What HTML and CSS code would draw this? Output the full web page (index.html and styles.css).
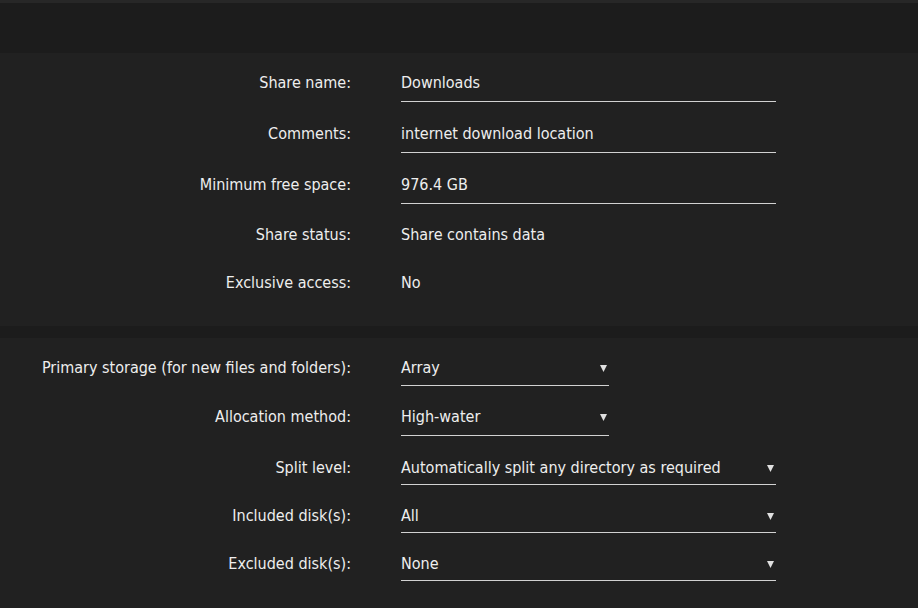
FILE: index.html
```html
<!DOCTYPE html>
<html>
<head>
<meta charset="utf-8">
<link rel="stylesheet" href="styles.css">
</head>
<body>
<div class="topbar"></div>
<section class="panel">
  <div class="row h51">
    <div class="label">Share name:</div>
    <div class="value field">Downloads</div>
  </div>
  <div class="row h51">
    <div class="label">Comments:</div>
    <div class="value field">internet download location</div>
  </div>
  <div class="row h50">
    <div class="label">Minimum free space:</div>
    <div class="value field">976.4 GB</div>
  </div>
  <div class="row h48">
    <div class="label">Share status:</div>
    <div class="value">Share contains data</div>
  </div>
  <div class="row h48">
    <div class="label">Exclusive access:</div>
    <div class="value">No</div>
  </div>
</section>
<section class="panel second">
  <div class="row h50 low1">
    <div class="label">Primary storage (for new files and folders):</div>
    <div class="value field select short"><span>Array</span><svg class="arrow" width="7" height="8" viewBox="0 0 7 8"><polygon points="0,1 7,1 3.5,8" fill="#e0e0e0"/></svg></div>
  </div>
  <div class="row h49">
    <div class="label">Allocation method:</div>
    <div class="value field select short"><span>High-water</span><svg class="arrow" width="7" height="8" viewBox="0 0 7 8"><polygon points="0,1 7,1 3.5,8" fill="#e0e0e0"/></svg></div>
  </div>
  <div class="row h48 low2">
    <div class="label">Split level:</div>
    <div class="value field select"><span>Automatically split any directory as required</span><svg class="arrow" width="7" height="8" viewBox="0 0 7 8"><polygon points="0,1 7,1 3.5,8" fill="#e0e0e0"/></svg></div>
  </div>
  <div class="row h48 low2">
    <div class="label">Included disk(s):</div>
    <div class="value field select"><span>All</span><svg class="arrow" width="7" height="8" viewBox="0 0 7 8"><polygon points="0,1 7,1 3.5,8" fill="#e0e0e0"/></svg></div>
  </div>
  <div class="row h48 low2">
    <div class="label">Excluded disk(s):</div>
    <div class="value field select"><span>None</span><svg class="arrow" width="7" height="8" viewBox="0 0 7 8"><polygon points="0,1 7,1 3.5,8" fill="#e0e0e0"/></svg></div>
  </div>
</section>
</body>
</html>
```
FILE: styles.css
```css
html, body {
  margin: 0;
  padding: 0;
  background: #1c1c1c;
  font-family: "DejaVu Sans Condensed", "DejaVu Sans", sans-serif;
  font-size: 16px;
  color: #eeeeee;
  overflow: hidden;
}
.topbar {
  height: 50px;
  border-top: 3px solid #272727;
  background: #1c1c1c;
}
.panel {
  background: #212121;
  padding: 11px 0 14px;
}
.panel.second {
  margin-top: 12px;
  padding-top: 10px;
  padding-bottom: 20px;
}
.row {
  display: flex;
  column-gap: 50px;
  height: 49px;
}
.row.h51 { height: 51px; }
.row.h50 { height: 50px; }
.row.h49 { height: 49px; }
.row.h48 { height: 48px; }
.label {
  width: 351px;
  text-align: right;
  padding-top: 9px;
  line-height: 20px;
  white-space: nowrap;
}
.value {
  padding-top: 9px;
  line-height: 20px;
  white-space: nowrap;
}
.field {
  width: 375px;
  height: 20px;
  padding-bottom: 8px;
  border-bottom: 1px solid #d2d2d2;
}
.low1 .label, .low1 .value { padding-top: 10px; }
.low1 .field { padding-bottom: 7px; }
.low2 .label, .low2 .value { padding-top: 11px; }
.low2 .field { padding-bottom: 6px; }
.select {
  display: flex;
  align-items: center;
  justify-content: space-between;
}
.select.short {
  width: 208px;
}
.arrow {
  margin-right: 2px;
  margin-top: -1px;
}
```
